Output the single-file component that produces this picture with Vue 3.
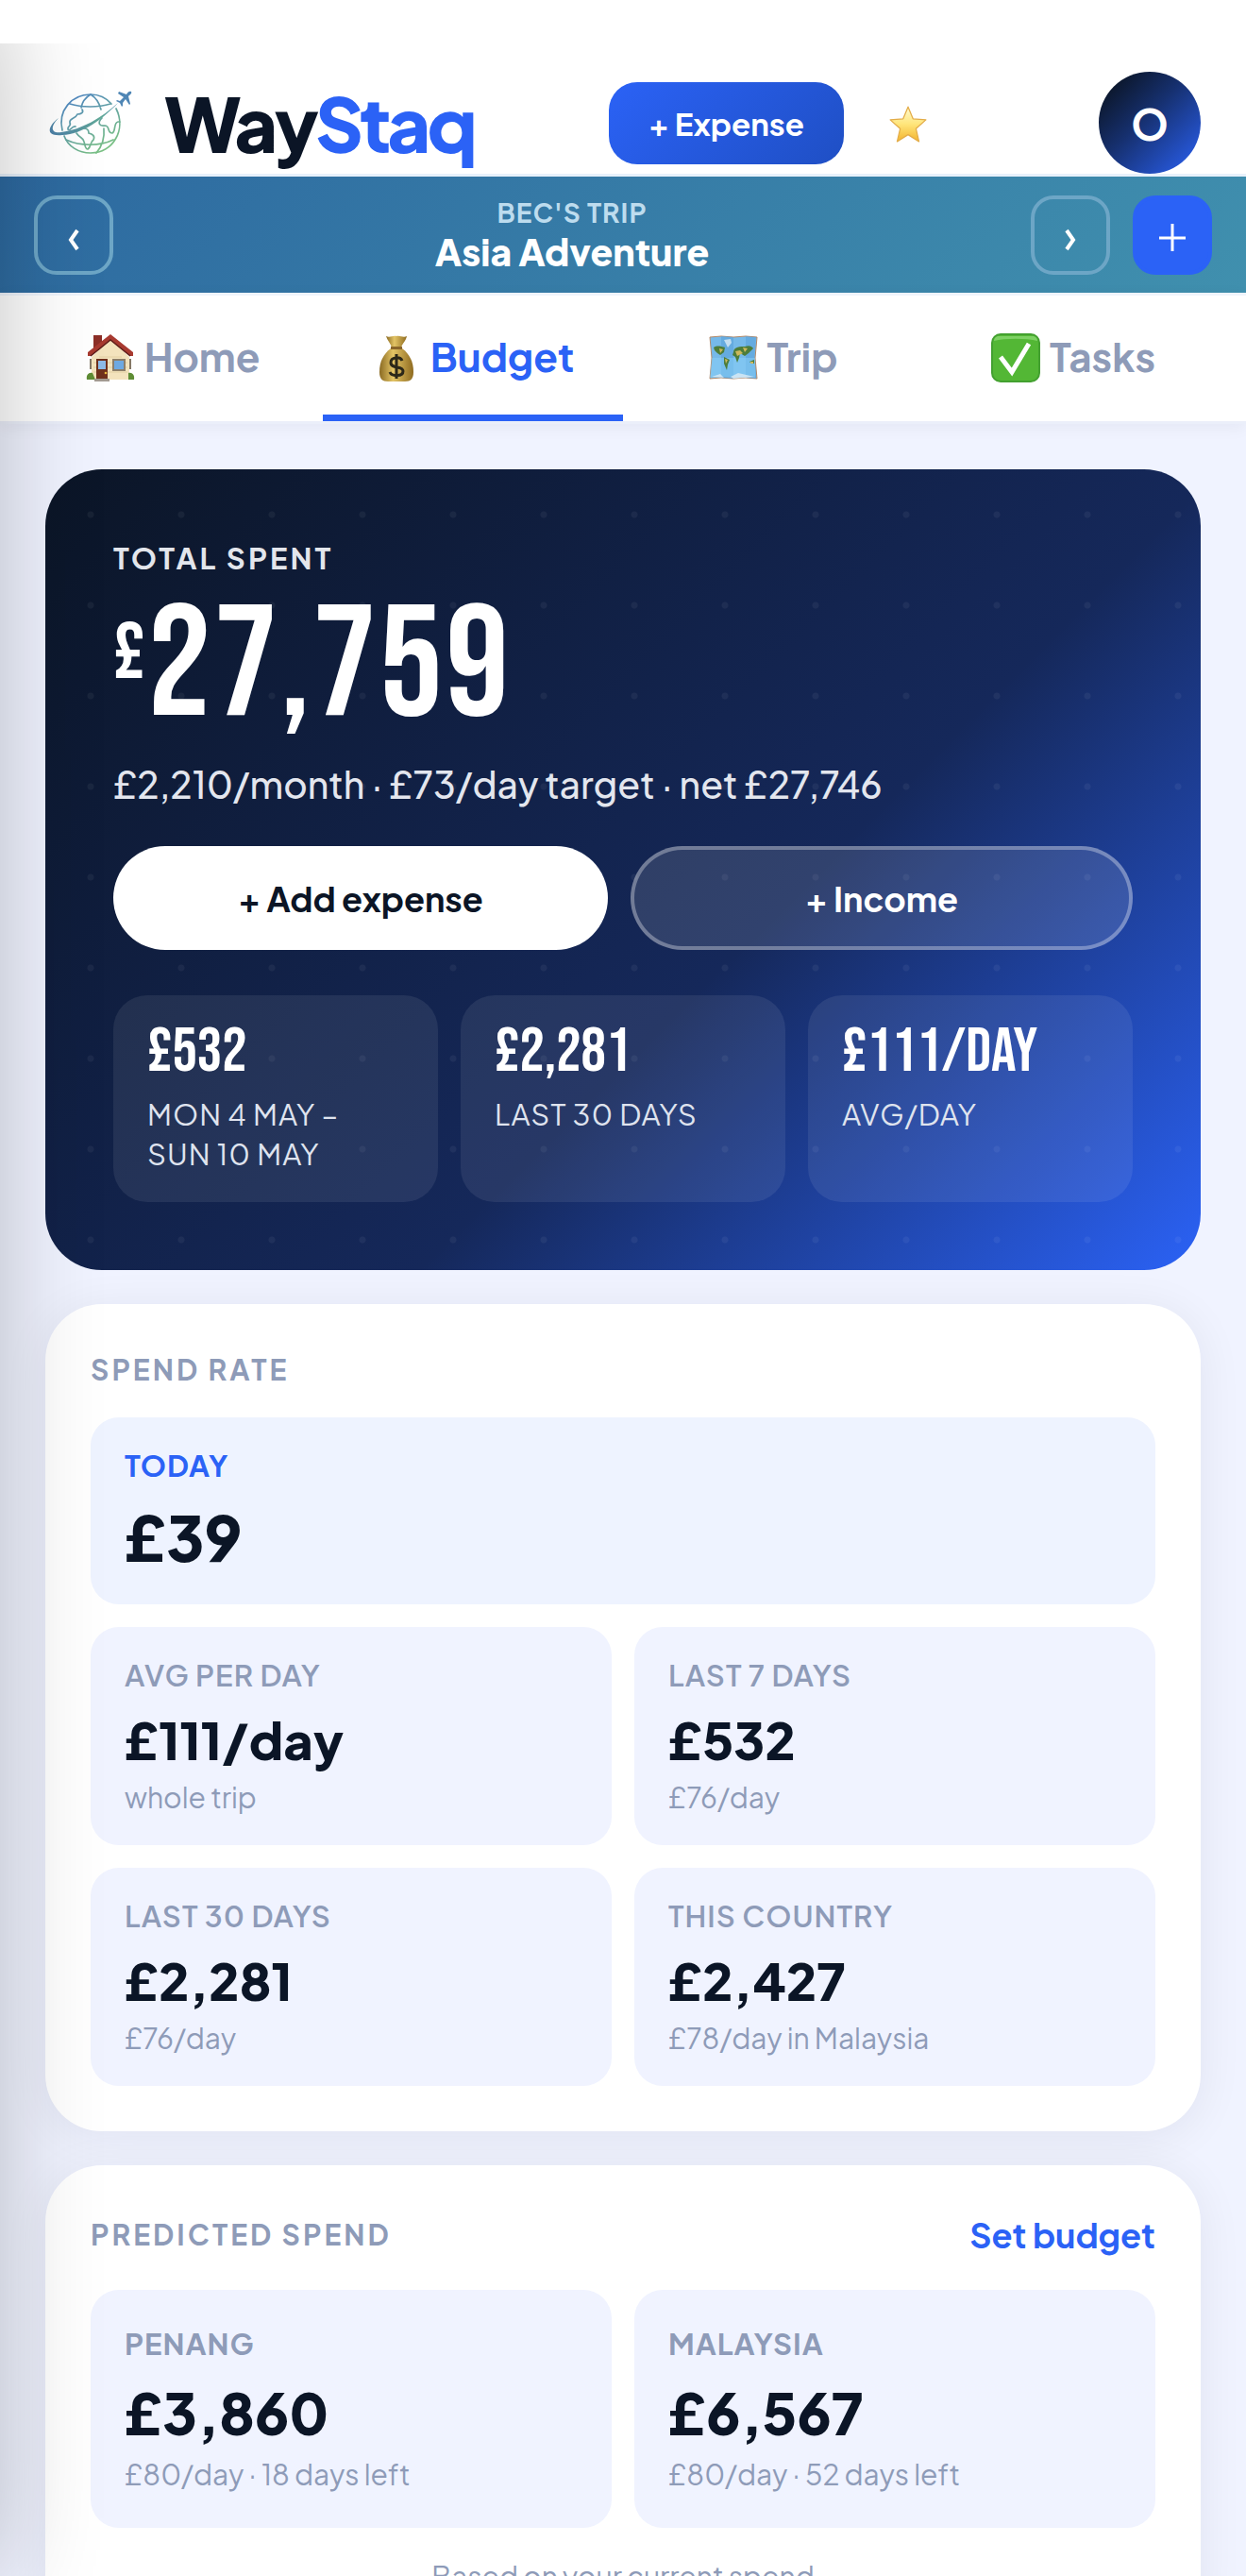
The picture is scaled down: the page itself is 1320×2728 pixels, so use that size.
<template>
  <div class="app">
    <header class="header">
      <a class="brand" href="#">
        <svg class="brand-logo" viewBox="0 0 96 76" fill="none" aria-hidden="true">
          <defs>
            <linearGradient id="globe" x1="20" y1="4" x2="62" y2="72" gradientUnits="userSpaceOnUse">
              <stop offset="0" stop-color="#4a7fcb" />
              <stop offset="1" stop-color="#7cc47f" />
            </linearGradient>
            <linearGradient id="orbit" x1="4" y1="50" x2="90" y2="8" gradientUnits="userSpaceOnUse">
              <stop offset="0" stop-color="#4c7fa8" />
              <stop offset="0.6" stop-color="#62aa98" />
              <stop offset="1" stop-color="#4a7fc0" />
            </linearGradient>
          </defs>
          <g stroke="url(#globe)" stroke-width="1.7" stroke-linecap="round">
            <path d="M18 46C13 25 28 8 48 8c8 0 16 3 22 10M75 23c11 22-3 47-27 47-13 0-24-7-28-18" />
            <path d="M26 18c13 4 30 4 43 0M38 22c1-6 5-11 10-14 5 3 9 8 11 16M22 56c15 7 36 7 50 0M62 44c1 10-2 19-8 26" />
            <path d="M39 24c2 3-1 5-5 5-2 5-9 4-8 9 2 4-3 3-2 7 2 3 4-4 8-3" />
            <path d="M60 33c-5 5-3 9 3 8 6 0 2 8 8 8 4-2 1-11 6-12h2" />
            <path d="M33 49c4 6 7 4 8 9 1 3 1 8 4 8 4-3 2-7 6-10 2-4-1-6-5-7 0-3-2-5-5-5" />
          </g>
          <path d="M14 33C4 43 7 50 17 48c22-3 42-15 60-31-16 17-37 33-59 34C0 53 2 42 14 33Z" fill="url(#orbit)" />
          <path d="M91 5c-2-1-4 1-5 3l-8-3-1 2 6 4-4 4-3-1-1 1 4 2 2 4 1-1v-3l3-4 4 6 1-1-2-8c2-2 4-3 3-5Z" fill="#4f86b5" />
        </svg>
        <span class="wordmark">Way<span class="wordmark-accent">Staq</span></span>
      </a>
      <div class="actions">
        <button class="expense-btn" type="button">+ Expense</button>
        <button class="star-btn" type="button" aria-label="Favourites">
          <svg viewBox="0 0 40 40" aria-hidden="true">
            <defs>
              <linearGradient id="star" x1="0" y1="0" x2="0" y2="1">
                <stop offset="0" stop-color="#fffbd0" />
                <stop offset="0.5" stop-color="#ffe57a" />
                <stop offset="1" stop-color="#f3b32c" />
              </linearGradient>
            </defs>
            <path d="m20 4 5 12 13 1-10 9 3 13-11-7-11 7 3-13-10-9 13-1Z" fill="url(#star)" stroke="#e3ac48" stroke-width="1.2" stroke-linejoin="round" />
          </svg>
        </button>
        <button class="avatar" type="button">O</button>
      </div>
    </header>

    <section class="trip-bar">
      <button class="trip-btn" type="button" aria-label="Previous trip">
        <svg viewBox="0 0 48 48"><path d="m28 19-7 10 7 10" /></svg>
      </button>
      <div class="trip-info">
        <div class="trip-owner">BEC'S TRIP</div>
        <div class="trip-name">Asia Adventure</div>
      </div>
      <button class="trip-btn" type="button" aria-label="Next trip">
        <svg viewBox="0 0 48 48"><path d="m20 19 7 10-7 10" /></svg>
      </button>
      <button class="trip-btn trip-add" type="button" aria-label="New trip">
        <svg viewBox="0 0 48 48"><path d="M24 12v29M10 27h28" /></svg>
      </button>
    </section>

    <nav class="tabs">
      <a
        v-for="tab in tabs"
        :key="tab.id"
        href="#"
        class="tab"
        :class="{ active: tab.id === activeTab }"
        @click.prevent="activeTab = tab.id"
      >
        <svg v-if="tab.id === 'home'" class="tab-icon" viewBox="0 0 52 52" aria-hidden="true">
          <path d="M8 2h9v16H8z" fill="#8c2f27" />
          <path d="M6 25 26 6l20 19v24H6z" fill="#f3e3bd" />
          <path d="M8 31h36M8 36h36M8 41h36M14 25h24" stroke="#e2cfa2" />
          <path d="M26 1 2 20v4h3L26 7l21 17h3v-4Z" fill="#a83a30" />
          <path d="M5 24 26 7l21 17" fill="none" stroke="#5f1d18" stroke-width="1.5" />
          <path d="M11 27h12v23H11z" fill="#6f301c" />
          <path d="M13 29h8v9h-8z" fill="#8dbbe8" />
          <circle cx="21" cy="42" r="1.3" fill="#e8b93f" />
          <path d="M28 27h14v13H28z" fill="#8d7f6a" />
          <path d="M30 29h10v9H30z" fill="#6ea9e2" />
          <path d="M4 27h2v11H4zM46 27h2v11h-2z" fill="#857866" />
          <path d="M1 49c-1-5 2-8 6-7l3 7ZM51 49c1-5-2-8-6-7v7Z" fill="#5f8d35" />
          <path d="M9 48h16v3H9z" fill="#a39b92" />
        </svg>
        <svg v-else-if="tab.id === 'budget'" class="tab-icon" viewBox="0 0 52 52" aria-hidden="true">
          <defs>
            <linearGradient id="bag" x1="0" x2="1">
              <stop offset="0" stop-color="#8a6a22" />
              <stop offset="0.4" stop-color="#e3c465" />
              <stop offset="1" stop-color="#8f6b20" />
            </linearGradient>
          </defs>
          <path d="M15 3c4 2 7-1 11 0 4-1 7 2 11 0-1 5-5 8-6 12H21c-1-4-5-8-6-12Z" fill="url(#bag)" />
          <path d="M20 16C12 22 8 30 8 41c0 7 3 10 9 10h18c6 0 9-3 9-10 0-11-4-19-12-25Z" fill="url(#bag)" />
          <path d="M20 14h12v3H20z" fill="#8b662a" />
          <path d="M32 29c-2-5-12-4-12 2 0 7 13 3 13 9 0 6-12 6-14 1M26 22v26" fill="none" stroke="#2b2718" stroke-width="3" />
        </svg>
        <svg v-else-if="tab.id === 'trip'" class="tab-icon" viewBox="0 0 52 52" aria-hidden="true">
          <path d="m1 4 12-1 13 1 13-1 12 1-2 22 2 22-12-1-13 1-13-1-12 1 2-22Z" fill="#76b9e9" stroke="#b58a68" />
          <path d="m13 3 13 1v44l-13-1ZM39 3l11 1-2 22 2 22-11-1Z" fill="#5ca3db" opacity="0.65" />
          <path d="M3 26h46v21l-10-1-13 1-13-1-12 1Z" fill="#8fd5fb" opacity="0.45" />
          <path d="M5 15c4-3 9-1 12 0l-1 5-4 3-3-2-3-3ZM16 25l6 3-2 5-1 6-3-7ZM26 20c0-6 8-6 12-6 5-2 8 0 9 2l-5 5-4 3-5-3-1 5-2 5-2-6-3-2ZM43 30l5-2v4l-4-1Z" fill="#4d7d3a" />
          <path d="m11 16 4 1-3 4ZM28 19l5-1 3 3-6 3ZM36 15l5 1-3 4ZM17 27l3 1-2 4ZM44 30h3v2h-3z" fill="#cdb85c" />
          <path d="m16 7 7-1 1 4-4 5ZM23 46l8-4 17 4-9 1-13 1ZM3 46l9-3 4 4Z" fill="#dcebf5" opacity="0.8" />
        </svg>
        <svg v-else class="tab-icon" viewBox="0 0 52 52" aria-hidden="true">
          <rect x="1" y="1" width="50" height="50" rx="9" fill="#53b735" stroke="#43a030" stroke-width="2" />
          <path d="M9 3h34c4 0 6 2 6 5-12-3-34-3-46 0 0-3 2-5 6-5Z" fill="#9be383" opacity="0.6" />
          <path d="m10 25 12 16 18-30" fill="none" stroke="#fff" stroke-width="5" />
        </svg>
        {{ tab.label }}
      </a>
    </nav>

    <main class="content">
      <section class="hero">
        <div class="hero-label">TOTAL SPENT</div>
        <div class="hero-amount"><span class="hero-currency">£</span>27,759</div>
        <div class="hero-sub">£2,210/month · £73/day target · net £27,746</div>
        <div class="hero-actions">
          <button class="pill pill-solid" type="button">+ Add expense</button>
          <button class="pill pill-ghost" type="button">+ Income</button>
        </div>
        <div class="hero-stats">
          <div v-for="stat in heroStats" :key="stat.label" class="hero-stat">
            <div class="hero-stat-value">{{ stat.value }}</div>
            <div class="hero-stat-label">{{ stat.label }}</div>
          </div>
        </div>
      </section>

      <section class="card">
        <h2 class="card-title">SPEND RATE</h2>
        <div class="tiles">
          <div class="tile tile-today">
            <div class="tile-label">TODAY</div>
            <div class="tile-value">£39</div>
          </div>
          <div v-for="rate in rates" :key="rate.label" class="tile">
            <div class="tile-label">{{ rate.label }}</div>
            <div class="tile-value">{{ rate.value }}</div>
            <div class="tile-note">{{ rate.note }}</div>
          </div>
        </div>
      </section>

      <section class="card">
        <div class="card-head">
          <h2 class="card-title">PREDICTED SPEND</h2>
          <a class="card-link" href="#">Set budget</a>
        </div>
        <div class="tiles">
          <div v-for="item in predictions" :key="item.label" class="tile tile-predicted">
            <div class="tile-label">{{ item.label }}</div>
            <div class="tile-value">{{ item.value }}</div>
            <div class="tile-note">{{ item.note }}</div>
          </div>
        </div>
        <p class="card-foot">Based on your current spend</p>
      </section>
    </main>

    <div class="edge-shadow"></div>
  </div>
</template>

<script setup>
import { ref } from 'vue'

const activeTab = ref('budget')

const tabs = [
  { id: 'home', label: 'Home' },
  { id: 'budget', label: 'Budget' },
  { id: 'trip', label: 'Trip' },
  { id: 'tasks', label: 'Tasks' },
]

const heroStats = [
  { value: '£532', label: 'MON 4 MAY – SUN 10 MAY' },
  { value: '£2,281', label: 'LAST 30 DAYS' },
  { value: '£111/DAY', label: 'AVG/DAY' },
]

const rates = [
  { label: 'AVG PER DAY', value: '£111/day', note: 'whole trip' },
  { label: 'LAST 7 DAYS', value: '£532', note: '£76/day' },
  { label: 'LAST 30 DAYS', value: '£2,281', note: '£76/day' },
  { label: 'THIS COUNTRY', value: '£2,427', note: '£78/day in Malaysia' },
]

const predictions = [
  { label: 'PENANG', value: '£3,860', note: '£80/day · 18 days left' },
  { label: 'MALAYSIA', value: '£6,567', note: '£80/day · 52 days left' },
]
</script>

<style>
body {
  background: #f0f3ff;
}
</style>

<style scoped>
.app {
  position: relative;
  display: flex;
  flex-direction: column;
  height: 100vh;
  overflow: hidden;
  background: #f0f3ff;
  color: #0b1526;
  font-family: 'Plus Jakarta Sans', Inter, 'Open Sans', sans-serif;
}
button {
  border: none;
  padding: 0;
  font: inherit;
  cursor: pointer;
}
a { text-decoration: none; }

.header {
  display: flex;
  align-items: center;
  flex-shrink: 0;
  padding: 76px 48px 0;
  background: #fff;
  border-bottom: 3px solid #e8f1fb;
}
.brand {
  display: flex;
  align-items: center;
  gap: 30px;
  color: #0b1526;
}
.brand-logo { width: 96px; height: 76px; }
.wordmark {
  font-size: 79px;
  line-height: 96px;
  font-weight: 800;
  letter-spacing: -4px;
}
.wordmark-accent { color: #2b62f6; }
.actions {
  display: flex;
  align-items: center;
  gap: 18px;
  margin-left: auto;
}
.expense-btn {
  width: 249px;
  height: 87px;
  border-radius: 30px;
  background: linear-gradient(135deg, #2b62f6, #1f4fc4);
  color: #fff;
  font-size: 33px;
  font-weight: 700;
}
.star-btn {
  width: 100px;
  height: 87px;
  margin-right: 134px;
  background: none;
}
.star-btn svg { display: block; width: 42px; height: 42px; margin: 0 auto; }
.avatar {
  width: 108px;
  height: 108px;
  border-radius: 50%;
  background: linear-gradient(135deg, #0b1526 10%, #16306f 45%, #2b62f6);
  color: #fff;
  font-size: 45px;
  font-weight: 700;
}

.trip-bar {
  display: flex;
  align-items: center;
  gap: 24px;
  flex-shrink: 0;
  padding: 20px 36px 19px;
  background: linear-gradient(135deg, #2d69a0, #4090ae);
}
.trip-btn {
  display: flex;
  align-items: center;
  justify-content: center;
  width: 84px;
  height: 84px;
  border: 4px solid #6da6c6;
  border-radius: 24px;
  background: none;
  color: #fff;
}
.trip-btn svg {
  width: 48px;
  height: 48px;
  fill: none;
  stroke: currentColor;
  stroke-width: 4;
}
.trip-add { border-color: #2b62f6; background: #2b62f6; }
.trip-add svg { stroke-width: 3; }
.trip-info {
  flex: 1;
  margin: 0 -24px;
  text-align: center;
}
.trip-owner {
  color: #bddcee;
  font-size: 28px;
  line-height: 36px;
  font-weight: 700;
  letter-spacing: 1px;
}
.trip-name {
  color: #fff;
  font-size: 39px;
  line-height: 48px;
  font-weight: 800;
}

.tabs {
  display: flex;
  flex-shrink: 0;
  padding: 0 24px;
  background: #fff;
  border-top: 3px solid #eff4fc;
  border-bottom: 3px solid #ebeffa;
  box-shadow: 0 4px 16px rgba(11, 21, 38, 0.05);
}
.tab {
  flex: 1;
  display: flex;
  align-items: center;
  justify-content: center;
  gap: 10px;
  height: 126px;
  border-bottom: 7px solid transparent;
  color: #8e9bb8;
  font-size: 42px;
  font-weight: 700;
}
.tab.active { color: #2b62f6; border-color: #2b62f6; }
.tab-icon { width: 52px; height: 52px; margin-top: 6px; }

.content {
  flex: 1;
  display: flex;
  flex-direction: column;
  gap: 36px;
  min-height: 0;
  padding: 48px;
  overflow-y: auto;
  scrollbar-width: none;
}
.hero {
  flex-shrink: 0;
  padding: 72px;
  border-radius: 60px;
  background:
    radial-gradient(circle at center, rgba(255, 255, 255, 0.05) 3px, transparent 4px) 0 0 / 96px 96px,
    linear-gradient(135deg, #0b1526 0%, #15285a 60%, #2b62f6 100%);
  color: #fff;
}
.hero-label {
  font-size: 31px;
  line-height: 43px;
  font-weight: 700;
  letter-spacing: 3px;
  color: #e3e6ec;
}
.hero-amount {
  display: flex;
  align-items: flex-start;
  font-family: 'Bebas Neue', 'Roboto Condensed', 'Liberation Sans Narrow', 'Liberation Sans', sans-serif;
  font-size: 168px;
  line-height: 190px;
  font-weight: 400;
  letter-spacing: 3px;
}
.hero-currency {
  font-size: 84px;
  line-height: 162px;
}
.hero-sub {
  color: #e3e6ee;
  font-size: 39px;
  line-height: 58px;
  font-weight: 500;
}
.hero-actions {
  display: flex;
  gap: 24px;
  margin-top: 36px;
}
.pill {
  flex: 1 1 0;
  height: 110px;
  border-radius: 55px;
  font-size: 36px;
  font-weight: 700;
}
.pill-solid { background: #fff; color: #0b1526; }
.pill-ghost {
  border: 4px solid rgba(255, 255, 255, 0.4);
  background: rgba(255, 255, 255, 0.12);
  background-clip: padding-box;
  color: #fff;
}
.hero-stats {
  display: grid;
  grid-template-columns: repeat(3, 1fr);
  gap: 24px;
  margin-top: 48px;
}
.hero-stat {
  padding: 30px 36px;
  border-radius: 36px;
  background: rgba(255, 255, 255, 0.08);
}
.hero-stat-value {
  font-family: 'Bebas Neue', 'Roboto Condensed', 'Liberation Sans Narrow', 'Liberation Sans', sans-serif;
  font-size: 66px;
  line-height: 62px;
  font-weight: 400;
}
.hero-stat-label {
  margin-top: 13px;
  color: #dfe3ee;
  font-size: 31px;
  line-height: 42px;
  letter-spacing: 1px;
}

.card {
  flex-shrink: 0;
  padding: 48px;
  border-radius: 60px;
  background: #fff;
  box-shadow: 0 6px 48px rgba(11, 21, 38, 0.07);
}
.card-head {
  display: flex;
  align-items: center;
  justify-content: space-between;
  height: 50px;
  margin-bottom: 34px;
}
.card-title {
  margin: 0 0 30px;
  color: #8e9bb8;
  font-size: 30px;
  line-height: 42px;
  font-weight: 700;
  letter-spacing: 3px;
}
.card-head .card-title { margin: 0; }
.card-link {
  color: #2b62f6;
  font-size: 36px;
  font-weight: 700;
}
.tiles {
  display: grid;
  grid-template-columns: 1fr 1fr;
  gap: 24px;
}
.tile {
  padding: 30px 36px;
  border-radius: 30px;
  background: #f0f3ff;
}
.tile-label {
  color: #8e9bb8;
  font-size: 31px;
  line-height: 42px;
  font-weight: 600;
  letter-spacing: 1px;
}
.tile-value {
  margin-top: 11px;
  font-size: 54px;
  line-height: 72px;
  font-weight: 800;
}
.tile-note {
  margin-top: 4px;
  color: #8e9bb8;
  font-size: 30px;
  line-height: 42px;
}
.tile-today {
  grid-column: 1 / -1;
  background: #eef3ff;
}
.tile-today .tile-label { color: #2b62f6; font-weight: 700; }
.tile-today .tile-value {
  margin: 14px 0 2px;
  font-size: 66px;
  line-height: 80px;
}
.tile-predicted { padding: 36px; }
.tile-predicted .tile-label { font-weight: 700; }
.tile-predicted .tile-value { font-size: 60px; line-height: 81px; }
.card-foot {
  margin: 30px 0 0;
  color: #8e9bb8;
  font-size: 30px;
  line-height: 42px;
  text-align: center;
}

.edge-shadow {
  position: absolute;
  top: 46px;
  bottom: 0;
  left: 0;
  width: 120px;
  overflow: hidden;
  pointer-events: none;
}
.edge-shadow::before {
  content: '';
  position: absolute;
  top: -46px;
  bottom: 0;
  right: 100%;
  width: 300px;
  box-shadow: 0 0 110px rgba(0, 0, 0, 0.24);
}
</style>
